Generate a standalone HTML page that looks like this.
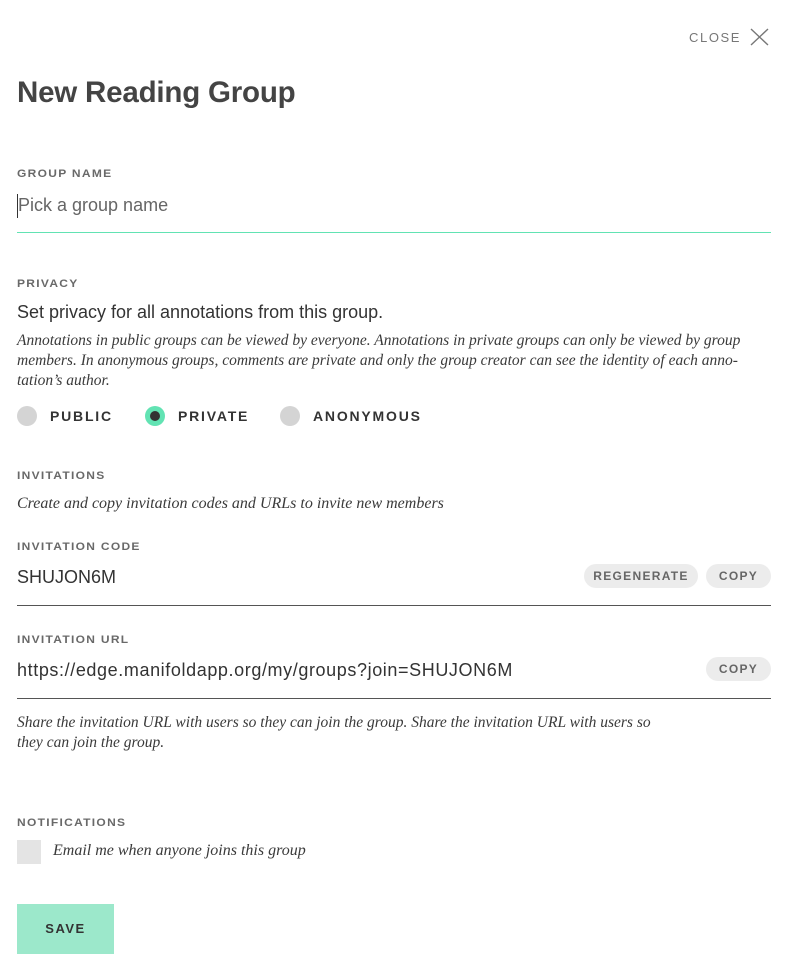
<!DOCTYPE html>
<html><head><style>
*{margin:0;padding:0;box-sizing:border-box}
body{width:802px;height:964px;background:#fff;position:relative;font-family:"Liberation Sans",sans-serif;color:#363636;overflow:hidden}
.a{position:absolute;white-space:nowrap}
.lbl{font-size:12px;letter-spacing:1.3px;color:#696969;font-weight:bold;transform:scaleY(0.95)}
.it{font-family:"Liberation Serif",serif;font-style:italic;font-size:16px;color:#3a3a3a}
.line{position:absolute;left:17px;width:754px;height:1px;background:#555}
.pill{position:absolute;height:24px;border-radius:12px;background:#ececec;font-size:12px;font-weight:bold;letter-spacing:1.3px;color:#666;line-height:24px;text-align:center}
.rad{position:absolute;width:20px;height:20px;border-radius:50%;background:#d4d4d4}
.rl{font-size:14px;font-weight:bold;letter-spacing:1.8px;color:#333}
</style></head><body>
<div class="a" style="left:689px;top:30px;font-size:13px;letter-spacing:1.6px;color:#777">CLOSE</div>
<svg class="a" style="left:750px;top:28px" width="19" height="18"><path d="M1 1L18 17M18 1L1 17" stroke="#777" stroke-width="1.4"/></svg>
<div class="a" style="left:17px;top:76px;font-size:29.5px;font-weight:bold;color:#444;letter-spacing:-0.2px">New Reading Group</div>
<div class="a lbl" style="left:17px;top:166px">GROUP NAME</div>
<div class="a" style="left:17px;top:194px;width:1px;height:24px;background:#333"></div>
<div class="a" style="left:18px;top:195px;font-size:18px;color:#666">Pick a group name</div>
<div class="line" style="top:232px;background:#62e3b3"></div>
<div class="a lbl" style="left:17px;top:276px">PRIVACY</div>
<div class="a" style="left:17px;top:302px;font-size:18px;color:#333">Set privacy for all annotations from this group.</div>
<div class="a it" style="left:17px;top:331px;line-height:20px;font-size:15.5px">Annotations in public groups can be viewed by everyone. Annotations in private groups can only be viewed by group<br>members. In anonymous groups, comments are private and only the group creator can see the identity of each anno-<br>tation’s author.</div>
<div class="rad" style="left:17px;top:406px"></div>
<div class="a rl" style="left:50px;top:408px">PUBLIC</div>
<div class="rad" style="left:145px;top:406px;background:#62e3b3"></div>
<div class="a" style="left:150px;top:411px;width:10px;height:10px;border-radius:50%;background:#333"></div>
<div class="a rl" style="left:178px;top:408px">PRIVATE</div>
<div class="rad" style="left:280px;top:406px"></div>
<div class="a rl" style="left:313px;top:408px">ANONYMOUS</div>
<div class="a lbl" style="left:17px;top:468px">INVITATIONS</div>
<div class="a it" style="left:17px;top:495px">Create and copy invitation codes and URLs to invite new members</div>
<div class="a lbl" style="left:17px;top:539px">INVITATION CODE</div>
<div class="a" style="left:17px;top:567px;font-size:18px;color:#333">SHUJON6M</div>
<div class="pill" style="left:584px;top:564px;width:114px">REGENERATE</div>
<div class="pill" style="left:706px;top:564px;width:65px">COPY</div>
<div class="line" style="top:605px"></div>
<div class="a lbl" style="left:17px;top:632px">INVITATION URL</div>
<div class="a" style="left:17px;top:660px;font-size:18px;letter-spacing:0.6px;color:#333">https://edge.manifoldapp.org/my/groups?join=SHUJON6M</div>
<div class="pill" style="left:706px;top:657px;width:65px">COPY</div>
<div class="line" style="top:698px"></div>
<div class="a it" style="left:17px;top:713px;line-height:20px;font-size:15.5px">Share the invitation URL with users so they can join the group. Share the invitation URL with users so<br>they can join the group.</div>
<div class="a lbl" style="left:17px;top:815px">NOTIFICATIONS</div>
<div class="a" style="left:17px;top:840px;width:24px;height:24px;background:#e4e4e4"></div>
<div class="a it" style="left:53px;top:842px">Email me when anyone joins this group</div>
<div class="a" style="left:17px;top:904px;width:97px;height:50px;background:#9ce8cb;font-size:13px;font-weight:bold;letter-spacing:1.5px;color:#333;text-align:center;line-height:50px">SAVE</div>
</body></html>
